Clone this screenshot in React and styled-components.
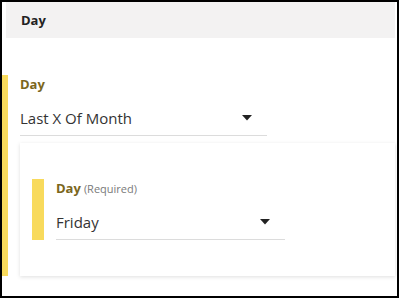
import styled, { createGlobalStyle } from "styled-components";

const GlobalStyle = createGlobalStyle`
  html, body {
    margin: 0;
    padding: 0;
    background: #ffffff;
  }
  body {
    font-family: "Open Sans", "Liberation Sans", sans-serif;
  }
`;

const Frame = styled.div`
  box-sizing: border-box;
  width: 399px;
  height: 298px;
  border: 2px solid #000;
  overflow: hidden;
  padding-right: 2px;
  display: flex;
  flex-direction: column;
`;

const Header = styled.div`
  height: 36px;
  margin-left: 4px;
  padding-left: 15px;
  background: #f3f2f2;
  display: flex;
  align-items: center;
  font-size: 13px;
  font-weight: 700;
  color: #222;
`;

const Section = styled.div`
  margin-top: 37px;
  border-left: ${(p) => p.bar}px solid #f8da5c;
  padding-left: ${(p) => p.gap}px;
`;

const Label = styled.div`
  height: 18px;
  line-height: 18px;
  font-size: 13px;
  font-weight: 700;
  color: #7b661c;
  margin-bottom: 15px;
`;

const Hint = styled.span`
  font-size: 11px;
  font-weight: 400;
  color: #7a7a7a;
  margin-left: 3px;
`;

const Select = styled.div`
  box-sizing: border-box;
  width: ${(p) => p.width}px;
  height: 28px;
  padding-bottom: 7px;
  line-height: 20px;
  font-size: 15px;
  color: #333;
  border-bottom: 1px solid #dcdcdc;
  display: flex;
  align-items: center;
  justify-content: space-between;
  padding-right: 15px;
`;

const Card = styled.div`
  margin-top: 7px;
  padding: 36px 12px;
  background: #fff;
  box-shadow: 0 1px 4px rgba(0, 0, 0, 0.13);
`;

const Field = styled.div`
  border-left: 12px solid #f8da5c;
  padding-left: 12px;
`;

const Caret = () => (
  <svg width="10" height="6" viewBox="0 0 10 6">
    <polygon points="0,0 10,0 5,5.5" fill="#222" />
  </svg>
);

export default function App() {
  return (
    <>
      <GlobalStyle />
      <Frame>
        <Header>Day</Header>
        <Section bar={6} gap={12}>
          <Label>Day</Label>
          <Select width={247}>
            <span>Last X Of Month</span>
            <Caret />
          </Select>
          <Card>
            <Field>
              <Label>
                Day<Hint>(Required)</Hint>
              </Label>
              <Select width={229}>
                <span>Friday</span>
                <Caret />
              </Select>
            </Field>
          </Card>
        </Section>
      </Frame>
    </>
  );
}
